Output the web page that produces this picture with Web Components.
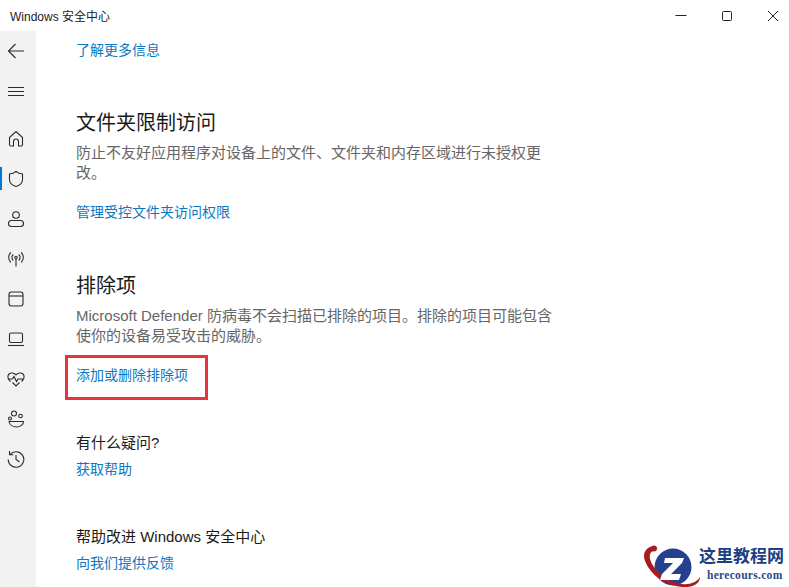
<!DOCTYPE html>
<html lang="zh">
<head>
<meta charset="utf-8">
<title>Windows 安全中心</title>
<style>
	html, body {
		margin: 0;
		height: 100%;
		overflow: hidden;
		background: #fff;
		font-family: "Liberation Sans", "Noto Sans CJK SC", sans-serif;
	}
</style>
</head>
<body>
<security-app>
	<nav-rail slot="rail"></nav-rail>
	<security-section link="了解更多信息" link-gap="0" style="margin-top:9px"></security-section>
	<security-section heading="文件夹限制访问" link="管理受控文件夹访问权限" style="margin-top:49px">防止不友好应用程序对设备上的文件、文件夹和内存区域进行未授权更改。</security-section>
	<security-section heading="排除项" link="添加或删除排除项" style="margin-top:50px">Microsoft Defender 防病毒不会扫描已排除的项目。排除的项目可能包含使你的设备易受攻击的威胁。</security-section>
	<security-section small heading="有什么疑问?" link="获取帮助" style="margin-top:47px"></security-section>
	<security-section small heading="帮助改进 Windows 安全中心" link="向我们提供反馈" style="margin-top:47px"></security-section>
	<red-box slot="over"></red-box>
	<site-logo slot="over"></site-logo>
</security-app>

<script>
const appTemplate = document.createElement("template");
appTemplate.innerHTML =
`<style>
	:host {
		display: flex;
		flex-direction: column;
		position: relative;
		width: 789px;
		height: 587px;
		overflow: hidden;
		color: #1a1a1a;
	}
	.title {
		display: flex;
		align-items: center;
		height: 31px;
		flex-shrink: 0;
		padding-left: 10px;
		padding-right: 0;
		font-size: 12px;
		color: #222;
	}
	.title span { flex: 1; }
	.ctl {
		display: flex;
		align-items: center;
		justify-content: center;
		width: 46px;
		height: 31px;
		flex-shrink: 0;
	}
	.ctl:last-child { margin-right: -7px; }
	.body { display: flex; flex: 1; min-height: 0; }
	.main { flex: 1; padding-left: 40px; min-width: 0; }
</style>
<div class="title">
	<span>Windows 安全中心</span>
	<div class="ctl"><svg width="12" height="12" viewBox="0 0 12 12"><path d="M0.5 5.500h11" stroke="#222" fill="none"/></svg></div>
	<div class="ctl"><svg width="12" height="12" viewBox="0 0 12 12"><rect x="1.500" y="1.500" width="9" height="9" rx="1" stroke="#222" fill="none"/></svg></div>
	<div class="ctl"><svg width="12" height="12" viewBox="0 0 12 12"><path d="M1 1l10 10M11 1L1 11" stroke="#222" fill="none"/></svg></div>
</div>
<div class="body">
	<slot name="rail"></slot>
	<div class="main"><slot></slot></div>
</div>
<slot name="over"></slot>`;

class SecurityApp extends HTMLElement {
	constructor() {
		super();
		this.attachShadow({mode: "open"}).appendChild(appTemplate.content.cloneNode(true));
	}
}

const navRailTemplate = document.createElement("template");
navRailTemplate.innerHTML =
`<style>
	:host {
		display: block;
		width: 36px;
		flex-shrink: 0;
		background: #f2f2f2;
	}
	.item {
		display: flex;
		align-items: center;
		justify-content: center;
		height: 40px;
		padding-right: 4px;
		position: relative;
	}
	.item.home { margin-top: 8px; }
	.item.active::before {
		content: "";
		position: absolute;
		left: 0;
		top: 8px;
		bottom: 9px;
		width: 2px;
		background: #0078d4;
	}
	svg { width: 18px; height: 18px; fill: none; stroke: #2b2b2b; stroke-width: 1.1; }
</style>
<div class="item"><svg viewBox="0 0 18 18"><path d="M17 9H1.500M8.500 2L1.500 9l7 7"/></svg></div>
<div class="item"><svg viewBox="0 0 18 18"><path d="M1 5.500h16M1 9.500h16M1 13.500h16"/></svg></div>
<div class="item home"><svg viewBox="0 0 18 18"><path d="M2.500 7.500L9 1.500l6.500 6v7a1.500 1.500 0 0 1-1.500 1.500h-2.500v-4.500a2.500 2.500 0 0 0-5 0V16H4a1.500 1.500 0 0 1-1.500-1.500z"/></svg></div>
<div class="item active"><svg viewBox="0 0 18 18"><path d="M9 1.500c2 1.600 4 2.300 6.500 2.500v5.500c0 3.500-2.800 5.900-6.500 7-3.700-1.100-6.500-3.500-6.500-7V4C5 3.800 7 3.100 9 1.500z"/></svg></div>
<div class="item"><svg viewBox="0 0 18 18"><circle cx="9" cy="5" r="3.300"/><path d="M4.500 10.500h9a2.800 2.800 0 0 1 0 6h-9a2.800 2.800 0 0 1 0-6z"/></svg></div>
<div class="item"><svg viewBox="0 0 18 18"><circle cx="9" cy="7.500" r="1.200"/><path d="M9 8.700V16.500M6.300 10.500a4 4 0 0 1 0-6M11.700 4.500a4 4 0 0 1 0 6M3.800 12.500a7 7 0 0 1 0-10M14.200 2.500a7 7 0 0 1 0 10"/></svg></div>
<div class="item"><svg viewBox="0 0 18 18"><rect x="2" y="2" width="14" height="14" rx="2.500"/><path d="M2 6h14"/></svg></div>
<div class="item"><svg viewBox="0 0 18 18"><rect x="2.500" y="3" width="13" height="9.500" rx="1.500"/><path d="M1 15.500h16"/></svg></div>
<div class="item"><svg viewBox="0 0 18 18"><path d="M3.500 11.500L2.500 10.500C.5 8.500.5 5.500 2 4s4.800-1.500 7 .8C11.200 2.500 14.500 2.500 16 4s1.500 4.500-.5 6.500l-1 1M1 9h4.500L7 6.500l2.500 5L11 9h6M5.500 12.500L9 16l3.500-3.500"/></svg></div>
<div class="item"><svg viewBox="0 0 18 18"><circle cx="7" cy="3.500" r="2.500"/><circle cx="13.500" cy="6" r="1.800"/><circle cx="3" cy="8.500" r="1.500"/><path d="M2 11.500h14.500c0 3-3 5.500-7 5.500s-7-2.500-7.500-5.500z"/></svg></div>
<div class="item"><svg viewBox="0 0 18 18"><path d="M3 4.500A7.800 7.800 0 1 1 1.200 9.500M2.500 1v3.800h3.800M9 5v4.500l3.500 2.500"/></svg></div>`;

class NavRail extends HTMLElement {
	constructor() {
		super();
		this.attachShadow({mode: "open"}).appendChild(navRailTemplate.content.cloneNode(true));
	}
}

const sectionTemplate = document.createElement("template");
sectionTemplate.innerHTML =
`<style>
	:host { display: block; width: 479px; }
	h2 {
		margin: 0;
		font-size: 20px;
		font-weight: 400;
		line-height: 28px;
		color: #1a1a1a;
	}
	:host([small]) h2 { font-size: 15px; line-height: 22px; }
	.text {
		margin-top: 6px;
		font-size: 15px;
		line-height: 20px;
		color: #666;
	}
	a {
		display: block;
		margin-top: 19px;
		font-size: 14px;
		line-height: 20px;
		color: #0a78c2;
		text-decoration: none;
	}
	:host([small]) a { margin-top: 5px; }
	:host([link-gap]) a { margin-top: 0; }
</style>
<h2></h2>
<div class="text"><slot></slot></div>
<a href="#"></a>`;

class SecuritySection extends HTMLElement {
	constructor() {
		super();
		this.attachShadow({mode: "open"}).appendChild(sectionTemplate.content.cloneNode(true));
		const h2 = this.shadowRoot.querySelector("h2");
		if(this.hasAttribute("heading")) {
			h2.textContent = this.getAttribute("heading");
		} else {
			h2.remove();
		}
		if(!this.textContent.trim()) {
			this.shadowRoot.querySelector(".text").remove();
		}
		this.shadowRoot.querySelector("a").textContent = this.getAttribute("link");
	}
}

class RedBox extends HTMLElement {
	constructor() {
		super();
		this.attachShadow({mode: "open"}).innerHTML =
		`<style>
			:host {
				position: absolute;
				left: 65px;
				top: 355px;
				width: 137px;
				height: 39px;
				border: 3px solid #e5343a;
			}
		</style>`;
	}
}

class SiteLogo extends HTMLElement {
	constructor() {
		super();
		this.attachShadow({mode: "open"}).innerHTML =
		`<style>
			:host {
				position: absolute;
				left: 642px;
				top: 545px;
				width: 147px;
				height: 42px;
				display: flex;
				background: #fff;
			}
			svg { width: 59px; height: 42px; flex-shrink: 0; }
			.words { display: flex; flex-direction: column; margin-left: -2px; }
			.cn {
				font: 700 17px/20px "Liberation Serif", "Noto Sans CJK SC", serif;
				color: #1c3f80;
				margin-top: 2px;
			}
			.en {
				font: 700 11.500px/14px "Liberation Serif", serif;
				letter-spacing: .3px;
				color: #26488a;
				margin-top: 1px;
				margin-left: 8px;
			}
		</style>
		<svg viewBox="0 0 59 42">
			<circle cx="31" cy="22" r="18.500" fill="#26408f"/>
			<path d="M12 1C4 2 0 8 3 16 8 28 20 40 40 42 52 43 58 38 58 32 55 37 48 40 40 39 25 37 11 25 8 14 7 9 9 6 12 6z" fill="#a81c20"/>
			<circle cx="12" cy="3.500" r="3" fill="#a81c20"/>
			<path d="M23 13h19l-2 5-11 11h10l-2 6H18l2-6 11-11h-9z" fill="#fff"/>
		</svg>
		<div class="words"><span class="cn">这里教程网</span><span class="en">herecours.com</span></div>`;
	}
}

customElements.define("security-app", SecurityApp);
customElements.define("nav-rail", NavRail);
customElements.define("security-section", SecuritySection);
customElements.define("red-box", RedBox);
customElements.define("site-logo", SiteLogo);
</script>
</body>
</html>
